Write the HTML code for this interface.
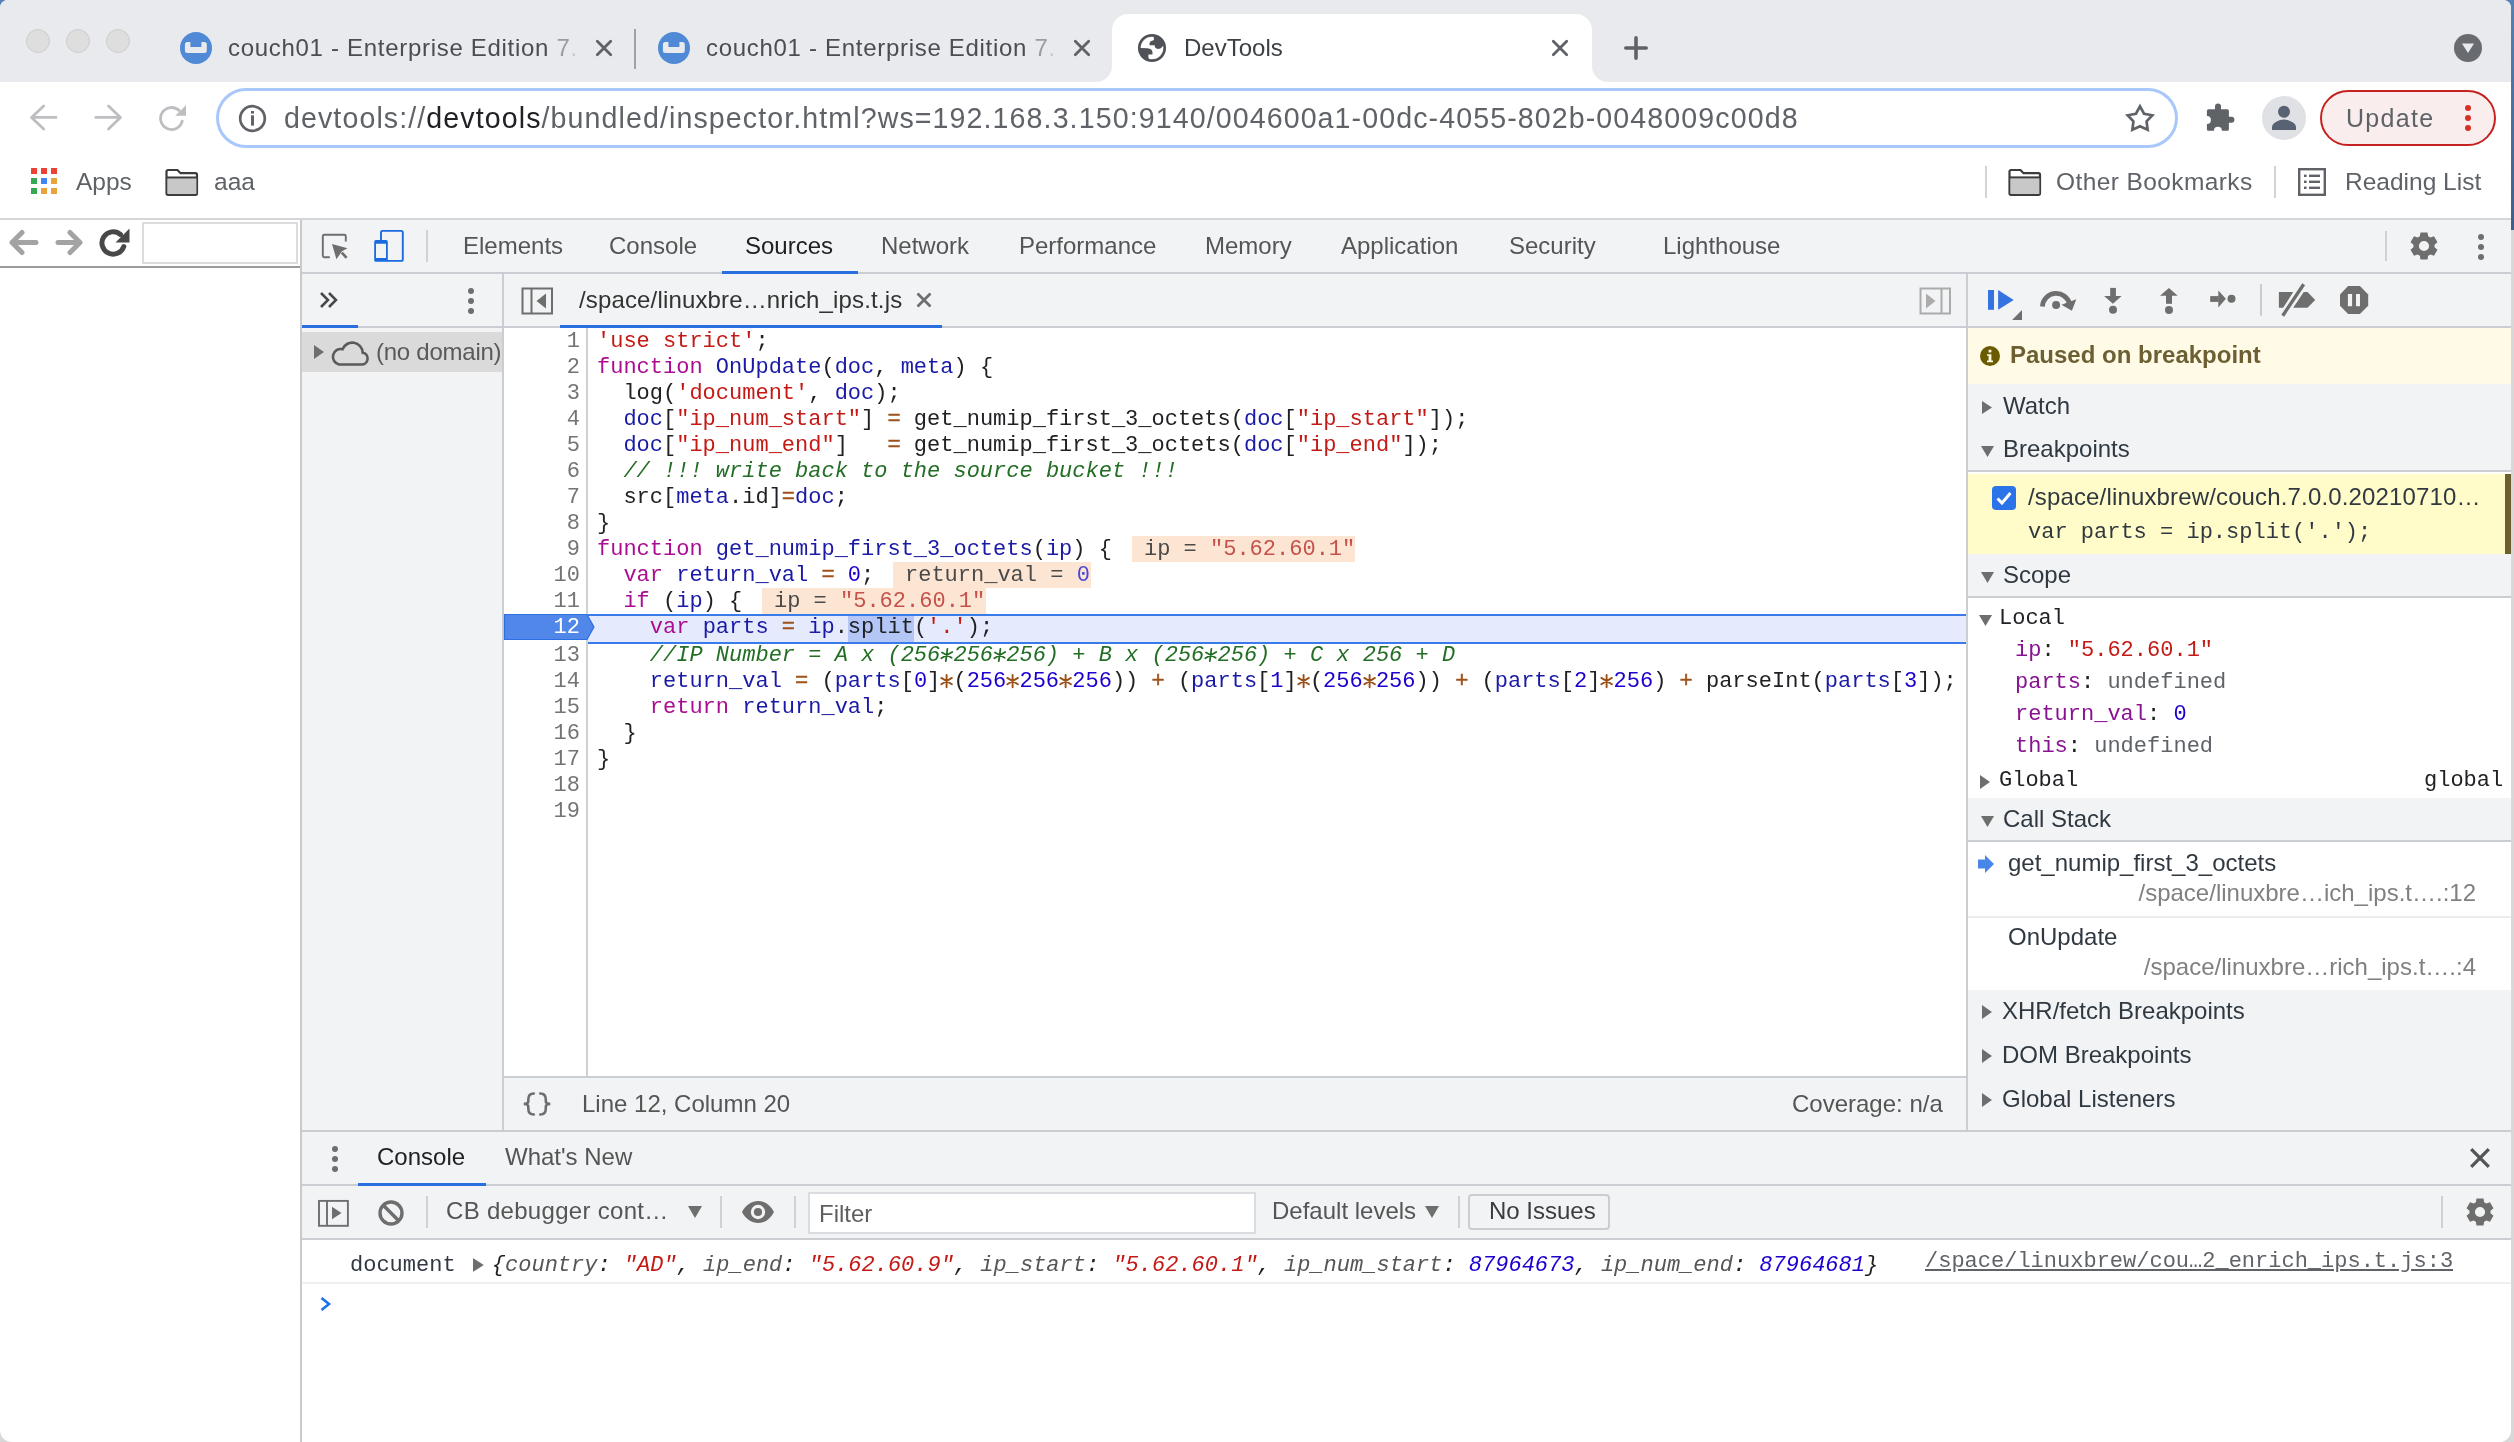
<!DOCTYPE html>
<html><head><meta charset="utf-8">
<style>
*{box-sizing:border-box;margin:0;padding:0}
html,body{width:2514px;height:1442px;overflow:hidden;background:linear-gradient(#5482b4 0,#3d5f8c 230px,#d8d8d8 230px)}
body{font-family:"Liberation Sans",sans-serif;position:relative}
.a{position:absolute}
.mono{font-family:"Liberation Mono",monospace}
svg{position:absolute;overflow:visible}
#win{will-change:transform;left:0;top:0;width:2511px;height:1442px;background:#fff;border-radius:8px 8px 12px 12px;overflow:hidden}
.t{position:absolute;white-space:pre;line-height:1}

.cl{position:absolute;left:597px;height:26px;line-height:26px;font-family:"Liberation Mono",monospace;font-size:22px;color:#202124;white-space:pre;padding-top:1px}
.ln{position:absolute;left:504px;width:76px;height:26px;line-height:26px;text-align:right;font-family:"Liberation Mono",monospace;font-size:22px;color:#747474;padding-top:1px}
.ln.cur{color:#fff}
.k{color:#aa0d91}.d{color:#1a1aa6}.s{color:#c41a16}.o{color:#a0521c;-webkit-text-stroke:0.5px #a0521c}.n{color:#1c00cf}.c{color:#236e25;font-style:italic}.sel{}.ast{position:relative;display:inline-block;vertical-align:top;margin-top:-1px}
.iv{position:absolute;height:26px;line-height:26px;padding-top:1px;padding-left:12px;background:#fce5d2;font-family:"Liberation Mono",monospace;font-size:22px;color:#4a4a4a;white-space:pre}
.ivs{color:#c5514a}.ivn{color:#4848d6}
</style></head><body>
<div id="win" class="a">
<!-- TAB STRIP -->
<div class="a" style="left:0;top:0;width:2511px;height:82px;background:#e8eaed"></div>
<!-- traffic lights -->
<div class="a" style="left:26px;top:29px;width:24px;height:24px;border-radius:50%;background:#dedede;border:1px solid #cdcdcd"></div>
<div class="a" style="left:66px;top:29px;width:24px;height:24px;border-radius:50%;background:#dedede;border:1px solid #cdcdcd"></div>
<div class="a" style="left:106px;top:29px;width:24px;height:24px;border-radius:50%;background:#dedede;border:1px solid #cdcdcd"></div>
<!-- tab 1 -->
<svg style="left:180px;top:32px" width="32" height="32" viewBox="0 0 32 32"><circle cx="16" cy="16" r="16" fill="#5089d6"/><path d="M7.4 10H10.4V15.1H21.4V10H24.3Q26.8 10 26.8 12.5V18.6Q26.8 21.1 24.3 21.1H7.4Q4.9 21.1 4.9 18.6V12.5Q4.9 10 7.4 10z" fill="#e8eaed"/></svg>
<div class="t" style="left:228px;top:36px;font-size:24px;color:#4a4d51;letter-spacing:0.7px">couch01 - Enterprise Edition <span style="color:#9a9ca0">7</span><span style="color:#c8cacd">.</span></div>
<svg style="left:594px;top:38px" width="20" height="20" viewBox="0 0 20 20"><path d="M3.3 3.3L16.7 16.7M16.7 3.3L3.3 16.7" stroke="#5f6368" stroke-width="2.8" stroke-linecap="round"/></svg>
<div class="a" style="left:634px;top:29px;width:2px;height:40px;background:#9ea1a6"></div>
<!-- tab 2 -->
<svg style="left:658px;top:32px" width="32" height="32" viewBox="0 0 32 32"><circle cx="16" cy="16" r="16" fill="#5089d6"/><path d="M7.4 10H10.4V15.1H21.4V10H24.3Q26.8 10 26.8 12.5V18.6Q26.8 21.1 24.3 21.1H7.4Q4.9 21.1 4.9 18.6V12.5Q4.9 10 7.4 10z" fill="#e8eaed"/></svg>
<div class="t" style="left:706px;top:36px;font-size:24px;color:#4a4d51;letter-spacing:0.7px">couch01 - Enterprise Edition <span style="color:#9a9ca0">7</span><span style="color:#c8cacd">.</span></div>
<svg style="left:1072px;top:38px" width="20" height="20" viewBox="0 0 20 20"><path d="M3.3 3.3L16.7 16.7M16.7 3.3L3.3 16.7" stroke="#5f6368" stroke-width="2.8" stroke-linecap="round"/></svg>
<!-- active tab -->
<div class="a" style="left:1112px;top:14px;width:480px;height:68px;background:#fff;border-radius:16px 16px 0 0"></div>
<div class="a" style="left:1096px;top:66px;width:16px;height:16px;background:radial-gradient(circle at 0 0,#e8eaed 15.5px,#fff 16.5px)"></div>
<div class="a" style="left:1592px;top:66px;width:16px;height:16px;background:radial-gradient(circle at 100% 0,#e8eaed 15.5px,#fff 16.5px)"></div>
<svg style="left:1134px;top:30px" width="36" height="36" viewBox="0 0 36 36"><circle cx="18" cy="18" r="12.7" fill="none" stroke="#4f5257" stroke-width="2.7"/><path d="M19.6 6.2L20 9.4Q19.5 10.6 17.8 10.8Q15.6 11.3 15.5 13.4V15.3H20.5L21 17.3Q22 19 24.5 19Q27 18.8 28.6 16.5L30 14A12.5 12.5 0 0 0 19.6 6.2z" fill="#4f5257"/><path d="M5.8 18L13.5 18.2Q18.3 18.6 18.5 22.4V24.6H14.4V27.5L15.4 30A12.5 12.5 0 0 1 5.6 18z" fill="#4f5257"/></svg>
<div class="t" style="left:1184px;top:36px;font-size:24px;color:#3c4043">DevTools</div>
<svg style="left:1550px;top:38px" width="20" height="20" viewBox="0 0 20 20"><path d="M3.3 3.3L16.7 16.7M16.7 3.3L3.3 16.7" stroke="#5f6368" stroke-width="2.8" stroke-linecap="round"/></svg>
<svg style="left:1622px;top:34px" width="28" height="28" viewBox="0 0 28 28"><path d="M14 3.8V24.2M3.8 14H24.2" stroke="#5f6368" stroke-width="3.6" stroke-linecap="round"/></svg>
<!-- tabs search dropdown -->
<svg style="left:2454px;top:34px" width="28" height="28" viewBox="0 0 28 28"><circle cx="14" cy="14" r="14" fill="#686b6f"/><path d="M8 9.5H20L14 19z" fill="#e8eaed"/></svg>

<!-- TOOLBAR -->
<svg style="left:28px;top:104px" width="32" height="28" viewBox="0 0 32 28"><path d="M15.7 2L3.5 13.4L15.7 25M3.8 13.4H28" stroke="#bdbec1" stroke-width="2.8" fill="none" stroke-linecap="round" stroke-linejoin="round"/></svg>
<svg style="left:92px;top:104px" width="32" height="28" viewBox="0 0 32 28"><path d="M16.5 2L28.5 13.4L16.5 25M28 13.4H3.8" stroke="#bdbec1" stroke-width="2.8" fill="none" stroke-linecap="round" stroke-linejoin="round"/></svg>
<svg style="left:156px;top:102px" width="32" height="32" viewBox="0 0 32 32"><path d="M26.2 19.2A11 11 0 1 1 23.2 8.6" stroke="#bdbec1" stroke-width="2.8" fill="none" stroke-linecap="round"/><path d="M30 3.2V13.7H19.2z" fill="#bdbec1"/></svg>
<div class="a" style="left:216px;top:88px;width:1962px;height:60px;border:3.6px solid #a8c7fa;border-radius:30px;background:#fff"></div>
<svg style="left:238px;top:104px" width="29" height="29" viewBox="0 0 29 29"><circle cx="14.5" cy="14.5" r="12.3" stroke="#5f6368" stroke-width="2.7" fill="none"/><rect x="13" y="7" width="3" height="2.6" fill="#5f6368"/><rect x="13" y="11.3" width="3" height="10.3" fill="#5f6368"/></svg>
<div class="t" style="left:284px;top:104px;font-size:28.6px;color:#5f6368;letter-spacing:1.09px">devtools://<span style="color:#202124">devtools</span>/bundled/inspector.html?ws=192.168.3.150:9140/004600a1-00dc-4055-802b-0048009c00d8</div>
<svg style="left:0;top:0" width="2514" height="1442" viewBox="0 0 2514 1442"><path d="M2140.00 106.30L2144.06 113.72L2152.36 115.28L2146.56 121.43L2147.64 129.82L2140.00 126.20L2132.36 129.82L2133.44 121.43L2127.64 115.28L2135.94 113.72z" fill="none" stroke="#5f6368" stroke-width="2.7" stroke-linejoin="miter" stroke-miterlimit="10"/></svg>
<svg style="left:0;top:0" width="2514" height="1442" viewBox="0 0 2514 1442"><path d="M2208.4 109.2H2215V106.5A3 3 0 0 1 2221 106.5V109.2H2227.4A1.5 1.5 0 0 1 2228.9 110.7V116.8H2231.4A3 3 0 0 1 2231.4 122.8H2228.9V129.2A1.5 1.5 0 0 1 2227.4 130.7H2221.9A4 4 0 0 0 2213.9 130.7H2208.4A1.5 1.5 0 0 1 2206.9 129.2V123.9A4 4 0 0 0 2206.9 115.9V110.7A1.5 1.5 0 0 1 2208.4 109.2z" fill="#5f6368"/></svg>
<div class="a" style="left:2262px;top:96px;width:44px;height:44px;border-radius:50%;background:#dfe1e5"></div>
<svg style="left:2268px;top:102px" width="32" height="32" viewBox="0 0 32 32"><circle cx="16" cy="9.8" r="6" fill="#596273"/><path d="M4 28v-3c0-4.2 7.6-7.4 12-7.4s12 3.2 12 7.4v3z" fill="#596273"/></svg>
<div class="a" style="left:2320px;top:90px;width:176px;height:56px;border:2.2px solid #c5221f;border-radius:28px;background:#f9eded"></div>
<div class="t" style="left:2346px;top:106px;font-size:25px;color:#5f6368;letter-spacing:1.3px">Update</div>
<div class="a" style="left:2465px;top:105px;width:6px;height:6px;border-radius:50%;background:#d93025"></div>
<div class="a" style="left:2465px;top:115px;width:6px;height:6px;border-radius:50%;background:#d93025"></div>
<div class="a" style="left:2465px;top:125px;width:6px;height:6px;border-radius:50%;background:#d93025"></div>

<!-- BOOKMARKS BAR -->
<svg style="left:30px;top:167px" width="28" height="28" viewBox="0 0 28 28"><rect x="1" y="1" width="6" height="6" fill="#ea4335"/><rect x="11" y="1" width="6" height="6" fill="#ea4335"/><rect x="21" y="1" width="6" height="6" fill="#ea4335"/><rect x="1" y="11" width="6" height="6" fill="#34a853"/><rect x="11" y="11" width="6" height="6" fill="#4285f4"/><rect x="21" y="11" width="6" height="6" fill="#e8a43a"/><rect x="1" y="21" width="6" height="6" fill="#34a853"/><rect x="11" y="21" width="6" height="6" fill="#e8a43a"/><rect x="21" y="21" width="6" height="6" fill="#e8a43a"/></svg>
<div class="t" style="left:76px;top:170px;font-size:24.5px;color:#5f6368">Apps</div>
<svg style="left:165px;top:167px" width="34" height="30" viewBox="0 0 34 30"><path d="M1.5 4.5a1.5 1.5 0 0 1 1.5 -1.5h9.5l3 3.2h15a1.5 1.5 0 0 1 1.5 1.5v18.6a1.5 1.5 0 0 1 -1.5 1.5h-27.5a1.5 1.5 0 0 1 -1.5 -1.5z" fill="#fff" stroke="#3c3c3c" stroke-width="2.2"/><path d="M2.6 11.2h28.8v15.6h-28.8z" fill="#c8c8c8"/><path d="M1.5 10.4h31" stroke="#3c3c3c" stroke-width="2"/></svg>
<div class="t" style="left:214px;top:170px;font-size:24.5px;color:#5f6368">aaa</div>
<div class="a" style="left:1985px;top:166px;width:2px;height:32px;background:#d3d4d6"></div>
<svg style="left:2008px;top:167px" width="34" height="30" viewBox="0 0 34 30"><path d="M1.5 4.5a1.5 1.5 0 0 1 1.5 -1.5h9.5l3 3.2h15a1.5 1.5 0 0 1 1.5 1.5v18.6a1.5 1.5 0 0 1 -1.5 1.5h-27.5a1.5 1.5 0 0 1 -1.5 -1.5z" fill="#fff" stroke="#3c3c3c" stroke-width="2.2"/><path d="M2.6 11.2h28.8v15.6h-28.8z" fill="#c8c8c8"/><path d="M1.5 10.4h31" stroke="#3c3c3c" stroke-width="2"/></svg>
<div class="t" style="left:2056px;top:170px;font-size:24.5px;color:#5f6368;letter-spacing:0.4px">Other Bookmarks</div>
<div class="a" style="left:2274px;top:166px;width:2px;height:32px;background:#d3d4d6"></div>
<svg style="left:2298px;top:168px" width="28" height="28" viewBox="0 0 28 28"><rect x="1.2" y="1.2" width="25.6" height="25.6" fill="none" stroke="#5f6368" stroke-width="2.4"/><rect x="6" y="6.6" width="2.6" height="2.4" fill="#5f6368"/><rect x="11" y="6.6" width="11" height="2.4" fill="#5f6368"/><rect x="6" y="12.6" width="2.6" height="2.4" fill="#5f6368"/><rect x="11" y="12.6" width="11" height="2.4" fill="#5f6368"/><rect x="6" y="18.6" width="2.6" height="2.4" fill="#5f6368"/><rect x="11" y="18.6" width="11" height="2.4" fill="#5f6368"/></svg>
<div class="t" style="left:2345px;top:170px;font-size:24.5px;color:#5f6368">Reading List</div>
<div class="a" style="left:0;top:218px;width:2511px;height:2px;background:#d5d6d9"></div>

<!-- LEFT PAGE -->
<svg style="left:8px;top:229px" width="32" height="28" viewBox="0 0 32 28"><path d="M14 3.5L4 13.5L14 23.5M4.5 13.5H28" stroke="#a3a3a3" stroke-width="5" fill="none" stroke-linecap="round" stroke-linejoin="round"/></svg>
<svg style="left:54px;top:229px" width="32" height="28" viewBox="0 0 32 28"><path d="M16 3.5L26 13.5L16 23.5M25.5 13.5H4" stroke="#a3a3a3" stroke-width="5" fill="none" stroke-linecap="round" stroke-linejoin="round"/></svg>
<svg style="left:98px;top:227px" width="34" height="32" viewBox="0 0 34 32"><path d="M25.8 19.5A11.2 11.2 0 1 1 22.5 7.5" stroke="#484848" stroke-width="5" fill="none" stroke-linecap="round"/><path d="M31.5 1.5V15.5H17.5z" fill="#484848"/></svg>
<div class="a" style="left:142px;top:222px;width:156px;height:42px;border:2px solid #dcdcdc;background:#fff"></div>
<div class="a" style="left:0;top:266px;width:300px;height:2px;background:#9b9b9b"></div>
<div class="a" style="left:300px;top:220px;width:2px;height:1222px;background:#c8cacd"></div>

<!-- DEVTOOLS MAIN TOOLBAR -->
<div class="a" style="left:302px;top:220px;width:2209px;height:52px;background:#f1f3f4"></div>
<div class="a" style="left:302px;top:272px;width:2209px;height:2px;background:#cacdd1"></div>
<svg style="left:0;top:0" width="2514" height="1442" viewBox="0 0 2514 1442"><path d="M329.8 257.3H324.3a1.5 1.5 0 0 1 -1.5 -1.5V236.3a1.5 1.5 0 0 1 1.5 -1.5H344.3a1.5 1.5 0 0 1 1.5 1.5V241.6" fill="none" stroke="#6e6e6e" stroke-width="1.9"/><path d="M332 243.9L347.5 248.2L342 251.3L336.4 259.2z" fill="#6e6e6e"/><path d="M341.8 252.6L346.6 257.8" stroke="#6e6e6e" stroke-width="2.7"/>
<path d="M381 240.5V232.3a1.4 1.4 0 0 1 1.4 -1.4H401.4a1.4 1.4 0 0 1 1.4 1.4V259.5a1.4 1.4 0 0 1 -1.4 1.4H386.8" fill="none" stroke="#1b6ae0" stroke-width="1.9"/><path d="M375.8 240.1H386.2a1.6 1.6 0 0 1 1.6 1.6V260.2a1.6 1.6 0 0 1 -1.6 1.6H375.8a1.6 1.6 0 0 1 -1.6 -1.6V241.7a1.6 1.6 0 0 1 1.6 -1.6z M376 243.7V257.9H386V243.7z" fill="#1b6ae0" fill-rule="evenodd"/></svg>
<div class="a" style="left:426px;top:230px;width:2px;height:32px;background:#cfd1d4"></div>
<div class="t" style="left:463px;top:234px;font-size:24px;color:#555">Elements</div>
<div class="t" style="left:609px;top:234px;font-size:24px;color:#555">Console</div>
<div class="t" style="left:745px;top:234px;font-size:24px;color:#202124">Sources</div>
<div class="a" style="left:722px;top:271px;width:136px;height:3px;background:#2a6fdf"></div>
<div class="t" style="left:881px;top:234px;font-size:24px;color:#555">Network</div>
<div class="t" style="left:1019px;top:234px;font-size:24px;color:#555">Performance</div>
<div class="t" style="left:1205px;top:234px;font-size:24px;color:#555">Memory</div>
<div class="t" style="left:1341px;top:234px;font-size:24px;color:#555">Application</div>
<div class="t" style="left:1509px;top:234px;font-size:24px;color:#555">Security</div>
<div class="t" style="left:1663px;top:234px;font-size:24px;color:#555">Lighthouse</div>
<div class="a" style="left:2385px;top:231px;width:2px;height:30px;background:#cfd1d4"></div>
<svg style="left:0;top:0" width="2514" height="1442" viewBox="0 0 2514 1442"><path fill-rule="evenodd" fill="#6e6e6e" d="M2419.86 236.24L2420.49 232.45L2427.51 232.45L2428.14 236.24L2430.38 237.53L2433.99 236.19L2437.49 242.26L2434.52 244.71L2434.52 247.29L2437.49 249.74L2433.99 255.81L2430.38 254.47L2428.14 255.76L2427.51 259.55L2420.49 259.55L2419.86 255.76L2417.62 254.47L2414.01 255.81L2410.51 249.74L2413.48 247.29L2413.48 244.71L2410.51 242.26L2414.01 236.19L2417.62 237.53zM2429.1 246A5.1 5.1 0 1 0 2418.9 246A5.1 5.1 0 1 0 2429.1 246z"/></svg>
<div class="a" style="left:2477.8px;top:233.8px;width:6.4px;height:6.4px;border-radius:50%;background:#6e6e6e"></div>
<div class="a" style="left:2477.8px;top:243.8px;width:6.4px;height:6.4px;border-radius:50%;background:#6e6e6e"></div>
<div class="a" style="left:2477.8px;top:253.8px;width:6.4px;height:6.4px;border-radius:50%;background:#6e6e6e"></div>

<!-- SOURCES TOOLBAR ROW -->
<div class="a" style="left:302px;top:274px;width:2209px;height:52px;background:#f1f3f4"></div>
<div class="a" style="left:302px;top:326px;width:2209px;height:2px;background:#cacdd1"></div>
<!-- navigator -->
<svg style="left:319px;top:291px" width="22" height="20" viewBox="0 0 22 20"><path d="M2 2L9 9L2 16M10 2L17 9L10 16" fill="none" stroke="#474747" stroke-width="2.5"/></svg>
<div class="a" style="left:302px;top:325px;width:56px;height:3px;background:#2a6fdf"></div>
<div class="a" style="left:467.5px;top:287.5px;width:6.4px;height:6.4px;border-radius:50%;background:#6e6e6e"></div>
<div class="a" style="left:467.5px;top:298px;width:6.4px;height:6.4px;border-radius:50%;background:#6e6e6e"></div>
<div class="a" style="left:467.5px;top:307.5px;width:6.4px;height:6.4px;border-radius:50%;background:#6e6e6e"></div>
<div class="a" style="left:502px;top:274px;width:2px;height:856px;background:#cacdd1"></div>
<div class="a" style="left:302px;top:328px;width:200px;height:802px;background:#f1f3f4"></div>
<div class="a" style="left:302px;top:332px;width:200px;height:40px;background:#dadada"></div>
<svg style="left:313px;top:344px" width="12" height="16" viewBox="0 0 12 16"><path d="M1 1L11 8L1 15z" fill="#6e6e6e"/></svg>
<svg style="left:329.5px;top:338.5px" width="40" height="28" viewBox="0 0 40 28"><path d="M9 25.5h22.5a6 6 0 0 0 1.2 -11.9a10.5 10.5 0 0 0 -20.2 -3.4a7.7 7.7 0 0 0 -3.5 15.3z" fill="none" stroke="#5a5a5a" stroke-width="2.6"/></svg>
<div class="t" style="left:376px;top:340px;font-size:24px;color:#5a5a5a;letter-spacing:-0.25px">(no domain)</div>
<!-- editor tab -->
<svg style="left:521px;top:287px" width="33" height="28" viewBox="0 0 33 28"><rect x="1.5" y="1.5" width="29.5" height="25" fill="none" stroke="#6e6e6e" stroke-width="2"/><path d="M10.5 1.5V26.5" stroke="#6e6e6e" stroke-width="2"/><path d="M25 6.5V21.5L15.5 14z" fill="#6e6e6e"/></svg>
<div class="t" style="left:579px;top:288px;font-size:24px;color:#333;letter-spacing:0.15px">/space/linuxbre…nrich_ips.t.js</div>
<svg style="left:916px;top:292px" width="16" height="16" viewBox="0 0 16 16"><path d="M1.5 1.5L14.5 14.5M14.5 1.5L1.5 14.5" stroke="#6e6e6e" stroke-width="2.8"/></svg>
<div class="a" style="left:560px;top:325px;width:382px;height:3px;background:#2a6fdf"></div>
<svg style="left:1919px;top:287px" width="33" height="28" viewBox="0 0 33 28"><rect x="1.5" y="1.5" width="29.5" height="25" fill="none" stroke="#ababab" stroke-width="2"/><path d="M22.5 1.5V26.5" stroke="#ababab" stroke-width="2"/><path d="M7 6.5V21.5L16.5 14z" fill="#ababab"/></svg>
<div class="a" style="left:1966px;top:274px;width:2px;height:856px;background:#cacdd1"></div>
<!-- debugger toolbar -->
<svg style="left:0;top:0" width="2514" height="1442" viewBox="0 0 2514 1442">
<rect x="1988" y="290" width="6" height="19.8" fill="#3574e0"/>
<path d="M1998.1 290L2013.7 300L1998.1 309.8z" fill="#3574e0"/>
<path d="M2022 310.1V320H2012.1z" fill="#6e6e6e"/>
<path d="M2042.4 306.5A13.8 13.8 0 0 1 2069.6 304" fill="none" stroke="#6e6e6e" stroke-width="4.8"/>
<path d="M2061.5 304.8L2076.3 299.2L2071.9 310.8z" fill="#6e6e6e"/>
<circle cx="2056.1" cy="304.9" r="4" fill="#6e6e6e"/>
<rect x="2110.2" y="287.9" width="5.7" height="9" fill="#6e6e6e"/>
<path d="M2104.1 296.1H2121.6L2112.9 303.8z" fill="#6e6e6e"/>
<circle cx="2113" cy="309.8" r="4" fill="#6e6e6e"/>
<path d="M2160 295.7H2177.7L2168.9 288z" fill="#6e6e6e"/>
<rect x="2166" y="295" width="6" height="8.8" fill="#6e6e6e"/>
<circle cx="2169" cy="310" r="4" fill="#6e6e6e"/>
<rect x="2210.2" y="296.1" width="8.5" height="5.8" fill="#6e6e6e"/>
<path d="M2218.3 290.4L2225.9 298.8L2218.3 307.6z" fill="#6e6e6e"/>
<circle cx="2231.5" cy="298.8" r="4" fill="#6e6e6e"/>
<rect x="2260" y="284.2" width="2" height="31.5" fill="#cbcbcb"/>
<path d="M2278.9 292.1H2293.2L2283.2 307.8H2278.9z" fill="#6e6e6e"/>
<path d="M2303.7 292.1H2307.5L2315.2 300L2307.5 307.8H2293.2z" fill="#6e6e6e"/>
<path d="M2303.7 284.2L2282.7 315.7" stroke="#6e6e6e" stroke-width="3.4"/>
<path d="M2348.1 286.1H2359.9L2368.2 294.4V305.8L2359.9 314.1H2348.1L2340 305.8V294.4z" fill="#6e6e6e"/>
<rect x="2347.9" y="294" width="4.2" height="12.2" fill="#f1f3f4"/>
<rect x="2356" y="294" width="4" height="12.2" fill="#f1f3f4"/>
</svg>
<!-- EDITOR -->
<div class="a" style="left:504px;top:328px;width:1462px;height:748px;background:#fff"></div>
<div class="a" style="left:586px;top:328px;width:2px;height:748px;background:#d0d0d0"></div>
<!-- inline values -->
<div class="iv" style="left:1132px;top:536px;width:223px">ip = <span class="ivs">"5.62.60.1"</span></div>
<div class="iv" style="left:893px;top:562px;width:198px">return_val = <span class="ivn">0</span></div>
<div class="iv" style="left:762px;top:588px;width:224px">ip = <span class="ivs">"5.62.60.1"</span></div>
<!-- execution line -->
<div class="a" style="left:588px;top:614px;width:1378px;height:30px;background:#e5ebfc;border-top:2px solid #3a7bea;border-bottom:2px solid #3a7bea"></div>
<div class="a" style="left:848px;top:616px;width:66px;height:26px;background:#b3c6f5"></div>
<svg style="left:504px;top:614px" width="92" height="26" viewBox="0 0 92 26"><path d="M0.5 0.5H83L90 13L83 25.5H0.5z" fill="#5087e8" stroke="#2d6ee0" stroke-width="1.2"/></svg>
<div class="cl" style="top:328px;height:26px"><span class="s">&#x27;use strict&#x27;</span>;</div>
<div class="ln" style="top:328px">1</div>
<div class="cl" style="top:354px;height:26px"><span class="k">function</span> <span class="d">OnUpdate</span>(<span class="d">doc</span>, <span class="d">meta</span>) {</div>
<div class="ln" style="top:354px">2</div>
<div class="cl" style="top:380px;height:26px">  log(<span class="s">&#x27;document&#x27;</span>, <span class="d">doc</span>);</div>
<div class="ln" style="top:380px">3</div>
<div class="cl" style="top:406px;height:26px">  <span class="d">doc</span>[<span class="s">&quot;ip_num_start&quot;</span>] <span class="o">=</span> get_numip_first_3_octets(<span class="d">doc</span>[<span class="s">&quot;ip_start&quot;</span>]);</div>
<div class="ln" style="top:406px">4</div>
<div class="cl" style="top:432px;height:26px">  <span class="d">doc</span>[<span class="s">&quot;ip_num_end&quot;</span>]   <span class="o">=</span> get_numip_first_3_octets(<span class="d">doc</span>[<span class="s">&quot;ip_end&quot;</span>]);</div>
<div class="ln" style="top:432px">5</div>
<div class="cl" style="top:458px;height:26px">  <span class="c">// !!! write back to the source bucket !!!</span></div>
<div class="ln" style="top:458px">6</div>
<div class="cl" style="top:484px;height:26px">  src[<span class="d">meta</span>.id]<span class="o">=</span><span class="d">doc</span>;</div>
<div class="ln" style="top:484px">7</div>
<div class="cl" style="top:510px;height:26px">}</div>
<div class="ln" style="top:510px">8</div>
<div class="cl" style="top:536px;height:26px"><span class="k">function</span> <span class="d">get_numip_first_3_octets</span>(<span class="d">ip</span>) {</div>
<div class="ln" style="top:536px">9</div>
<div class="cl" style="top:562px;height:26px">  <span class="k">var</span> <span class="d">return_val</span> <span class="o">=</span> <span class="n">0</span>;</div>
<div class="ln" style="top:562px">10</div>
<div class="cl" style="top:588px;height:26px">  <span class="k">if</span> (<span class="d">ip</span>) {</div>
<div class="ln" style="top:588px">11</div>
<div class="cl" style="top:614px;height:28px">    <span class="k">var</span> <span class="d">parts</span> <span class="o">=</span> <span class="d">ip</span>.<span class="sel">split</span>(<span class="s">&#x27;.&#x27;</span>);</div>
<div class="ln cur" style="top:614px">12</div>
<div class="cl" style="top:642px;height:26px">    <span class="c">//IP Number = A x (256<svg class="ast" width="13.2" height="26" viewBox="0 0 13.2 26"><path d="M7.4 7L5.8 19.2M2 10.5L11.6 15.7M1.3 16.3L12.3 9.9" stroke="#236e25" stroke-width="1.8" stroke-linecap="round"/></svg>256<svg class="ast" width="13.2" height="26" viewBox="0 0 13.2 26"><path d="M7.4 7L5.8 19.2M2 10.5L11.6 15.7M1.3 16.3L12.3 9.9" stroke="#236e25" stroke-width="1.8" stroke-linecap="round"/></svg>256) + B x (256<svg class="ast" width="13.2" height="26" viewBox="0 0 13.2 26"><path d="M7.4 7L5.8 19.2M2 10.5L11.6 15.7M1.3 16.3L12.3 9.9" stroke="#236e25" stroke-width="1.8" stroke-linecap="round"/></svg>256) + C x 256 + D</span></div>
<div class="ln" style="top:642px">13</div>
<div class="cl" style="top:668px;height:26px">    <span class="d">return_val</span> <span class="o">=</span> (<span class="d">parts</span>[<span class="n">0</span>]<svg class="ast" width="13.2" height="26" viewBox="0 0 13.2 26"><path d="M6.6 7V19.2M1.3 9.9L11.9 16.3M1.3 16.3L11.9 9.9" stroke="#9a4f17" stroke-width="1.9" stroke-linecap="round"/></svg>(<span class="n">256</span><svg class="ast" width="13.2" height="26" viewBox="0 0 13.2 26"><path d="M6.6 7V19.2M1.3 9.9L11.9 16.3M1.3 16.3L11.9 9.9" stroke="#9a4f17" stroke-width="1.9" stroke-linecap="round"/></svg><span class="n">256</span><svg class="ast" width="13.2" height="26" viewBox="0 0 13.2 26"><path d="M6.6 7V19.2M1.3 9.9L11.9 16.3M1.3 16.3L11.9 9.9" stroke="#9a4f17" stroke-width="1.9" stroke-linecap="round"/></svg><span class="n">256</span>)) <span class="o">+</span> (<span class="d">parts</span>[<span class="n">1</span>]<svg class="ast" width="13.2" height="26" viewBox="0 0 13.2 26"><path d="M6.6 7V19.2M1.3 9.9L11.9 16.3M1.3 16.3L11.9 9.9" stroke="#9a4f17" stroke-width="1.9" stroke-linecap="round"/></svg>(<span class="n">256</span><svg class="ast" width="13.2" height="26" viewBox="0 0 13.2 26"><path d="M6.6 7V19.2M1.3 9.9L11.9 16.3M1.3 16.3L11.9 9.9" stroke="#9a4f17" stroke-width="1.9" stroke-linecap="round"/></svg><span class="n">256</span>)) <span class="o">+</span> (<span class="d">parts</span>[<span class="n">2</span>]<svg class="ast" width="13.2" height="26" viewBox="0 0 13.2 26"><path d="M6.6 7V19.2M1.3 9.9L11.9 16.3M1.3 16.3L11.9 9.9" stroke="#9a4f17" stroke-width="1.9" stroke-linecap="round"/></svg><span class="n">256</span>) <span class="o">+</span> parseInt(<span class="d">parts</span>[<span class="n">3</span>]);</div>
<div class="ln" style="top:668px">14</div>
<div class="cl" style="top:694px;height:26px">    <span class="k">return</span> <span class="d">return_val</span>;</div>
<div class="ln" style="top:694px">15</div>
<div class="cl" style="top:720px;height:26px">  }</div>
<div class="ln" style="top:720px">16</div>
<div class="cl" style="top:746px;height:26px">}</div>
<div class="ln" style="top:746px">17</div>
<div class="cl" style="top:772px;height:26px"></div>
<div class="ln" style="top:772px">18</div>
<div class="cl" style="top:798px;height:26px"></div>
<div class="ln" style="top:798px">19</div>
<!-- STATUS BAR -->
<div class="a" style="left:504px;top:1076px;width:1462px;height:2px;background:#cacdd1"></div>
<div class="a" style="left:504px;top:1078px;width:1462px;height:52px;background:#f1f3f4"></div>
<svg style="left:0;top:0" width="2514" height="1442" viewBox="0 0 2514 1442"><path d="M533.8 1093.5Q528.3 1093.5 528.3 1099.5V1101.5Q528.3 1103.8 523.8 1104Q528.3 1104.2 528.3 1106.5V1108.5Q528.3 1114.5 533.8 1114.5M540.3 1093.5Q545.8 1093.5 545.8 1099.5V1101.5Q545.8 1103.8 550.3 1104Q545.8 1104.2 545.8 1106.5V1108.5Q545.8 1114.5 540.3 1114.5" fill="none" stroke="#6e6e6e" stroke-width="2.6" stroke-linecap="round"/></svg>
<div class="t" style="left:582px;top:1092px;font-size:24px;color:#555">Line 12, Column 20</div>
<div class="t" style="left:1792px;top:1092px;font-size:24px;color:#555">Coverage: n/a</div>

<!-- SIDEBAR -->
<div class="a" style="left:1968px;top:328px;width:543px;height:802px;background:#f1f3f4"></div>
<div class="a" style="left:1968px;top:328px;width:543px;height:56px;background:#fffbe6"></div>
<svg style="left:1980px;top:346px" width="20" height="20" viewBox="0 0 20 20"><circle cx="10" cy="10" r="10" fill="#6b5b00"/><rect x="8.6" y="3.8" width="2.8" height="2.6" fill="#fffbe6"/><path d="M7 8.2H11.4V14.6H13V16.2H7V14.6H8.6V9.8H7z" fill="#fffbe6"/></svg>
<div class="t" style="left:2010px;top:343px;font-size:24px;font-weight:bold;color:#6c5f33">Paused on breakpoint</div>
<!-- Watch -->
<svg style="left:1981px;top:400px" width="12" height="15" viewBox="0 0 12 15"><path d="M1 1L11 7.5L1 14z" fill="#6e6e6e"/></svg>
<div class="t" style="left:2003px;top:394px;font-size:24px;color:#303942">Watch</div>
<!-- Breakpoints -->
<svg style="left:1980px;top:445px" width="15" height="13" viewBox="0 0 15 13"><path d="M1 1H14L7.5 12z" fill="#6e6e6e"/></svg>
<div class="t" style="left:2003px;top:437px;font-size:24px;color:#303942">Breakpoints</div>
<div class="a" style="left:1968px;top:470px;width:543px;height:2px;background:#cacdd1"></div>
<div class="a" style="left:1968px;top:472px;width:543px;height:2px;background:#fff"></div>
<div class="a" style="left:1968px;top:474px;width:543px;height:80px;background:#fffcc9"></div>
<div class="a" style="left:2505px;top:474px;width:6px;height:80px;background:#6b5e30"></div>
<svg style="left:1992px;top:486px" width="24" height="24" viewBox="0 0 24 24"><rect x="0" y="0" width="24" height="24" rx="4" fill="#2a73e8"/><path d="M5.5 12.5L10 17L18.5 7" fill="none" stroke="#fff" stroke-width="3"/></svg>
<div class="t" style="left:2028px;top:485px;font-size:24px;color:#303942;letter-spacing:0.15px">/space/linuxbrew/couch.7.0.0.20210710…</div>
<div class="t mono" style="left:2028px;top:522px;font-size:22px;color:#303942">var parts = ip.split('.');</div>
<!-- Scope -->
<svg style="left:1980px;top:571px" width="15" height="13" viewBox="0 0 15 13"><path d="M1 1H14L7.5 12z" fill="#6e6e6e"/></svg>
<div class="t" style="left:2003px;top:563px;font-size:24px;color:#303942">Scope</div>
<div class="a" style="left:1968px;top:596px;width:543px;height:2px;background:#cacdd1"></div>
<div class="a" style="left:1968px;top:598px;width:543px;height:200px;background:#fff"></div>
<svg style="left:1978px;top:614px" width="15" height="13" viewBox="0 0 15 13"><path d="M1 1H14L7.5 12z" fill="#6e6e6e"/></svg>
<div class="t mono" style="left:1999px;top:608px;font-size:22px;color:#202124">Local</div>
<div class="t mono" style="left:2015px;top:640px;font-size:22px;color:#202124"><span style="color:#881391">ip</span>: <span style="color:#c41a16">"5.62.60.1"</span></div>
<div class="t mono" style="left:2015px;top:672px;font-size:22px;color:#202124"><span style="color:#881391">parts</span>: <span style="color:#5f6368">undefined</span></div>
<div class="t mono" style="left:2015px;top:704px;font-size:22px;color:#202124"><span style="color:#881391">return_val</span>: <span style="color:#1c00cf">0</span></div>
<div class="t mono" style="left:2015px;top:736px;font-size:22px;color:#202124"><span style="color:#881391">this</span>: <span style="color:#5f6368">undefined</span></div>
<svg style="left:1979px;top:774px" width="12" height="16" viewBox="0 0 12 16"><path d="M1 1L11 8L1 15z" fill="#6e6e6e"/></svg>
<div class="t mono" style="left:1999px;top:770px;font-size:22px;color:#202124">Global</div>
<div class="t mono" style="left:2424px;top:770px;font-size:22px;color:#202124">global</div>
<!-- Call Stack -->
<svg style="left:1980px;top:815px" width="15" height="13" viewBox="0 0 15 13"><path d="M1 1H14L7.5 12z" fill="#6e6e6e"/></svg>
<div class="t" style="left:2003px;top:807px;font-size:24px;color:#303942">Call Stack</div>
<div class="a" style="left:1968px;top:840px;width:543px;height:2px;background:#cacdd1"></div>
<div class="a" style="left:1968px;top:842px;width:543px;height:148px;background:#fff"></div>
<svg style="left:1977px;top:854px" width="18" height="20" viewBox="0 0 18 20"><path d="M1 5.5H8V1L17 10L8 19V14.5H1z" fill="#4a86e8"/></svg>
<div class="t" style="left:2008px;top:851px;font-size:24px;color:#303942">get_numip_first_3_octets</div>
<div class="t" style="right:35px;top:881px;font-size:24px;color:#808080">/space/linuxbre…ich_ips.t….:12</div>
<div class="a" style="left:1968px;top:916px;width:543px;height:2px;background:#ececec"></div>
<div class="t" style="left:2008px;top:925px;font-size:24px;color:#303942">OnUpdate</div>
<div class="t" style="right:35px;top:955px;font-size:24px;color:#808080">/space/linuxbre…rich_ips.t….:4</div>
<!-- more headers -->
<svg style="left:1981px;top:1004px" width="12" height="16" viewBox="0 0 12 16"><path d="M1 1L11 8L1 15z" fill="#6e6e6e"/></svg>
<div class="t" style="left:2002px;top:999px;font-size:24px;color:#303942">XHR/fetch Breakpoints</div>
<svg style="left:1981px;top:1048px" width="12" height="16" viewBox="0 0 12 16"><path d="M1 1L11 8L1 15z" fill="#6e6e6e"/></svg>
<div class="t" style="left:2002px;top:1043px;font-size:24px;color:#303942">DOM Breakpoints</div>
<svg style="left:1981px;top:1092px" width="12" height="16" viewBox="0 0 12 16"><path d="M1 1L11 8L1 15z" fill="#6e6e6e"/></svg>
<div class="t" style="left:2002px;top:1087px;font-size:24px;color:#303942">Global Listeners</div>

<!-- DRAWER -->
<div class="a" style="left:302px;top:1130px;width:2209px;height:2px;background:#cacdd1"></div>
<div class="a" style="left:302px;top:1132px;width:2209px;height:52px;background:#f1f3f4"></div>
<div class="a" style="left:332px;top:1145.5px;width:6.4px;height:6.4px;border-radius:50%;background:#6e6e6e"></div>
<div class="a" style="left:332px;top:1155.5px;width:6.4px;height:6.4px;border-radius:50%;background:#6e6e6e"></div>
<div class="a" style="left:332px;top:1165.5px;width:6.4px;height:6.4px;border-radius:50%;background:#6e6e6e"></div>
<div class="t" style="left:377px;top:1145px;font-size:24px;color:#202124">Console</div>
<div class="t" style="left:505px;top:1145px;font-size:24px;color:#555">What's New</div>
<svg style="left:2470px;top:1148px" width="20" height="20" viewBox="0 0 20 20"><path d="M1.2 1.2L18.8 18.8M18.8 1.2L1.2 18.8" stroke="#555" stroke-width="3.3"/></svg>
<div class="a" style="left:302px;top:1184px;width:2209px;height:2px;background:#cacdd1"></div>
<div class="a" style="left:358px;top:1183px;width:128px;height:3px;background:#2a6fdf"></div>
<div class="a" style="left:302px;top:1186px;width:2209px;height:52px;background:#f1f3f4"></div>
<svg style="left:317px;top:1199px" width="33" height="28" viewBox="0 0 33 28"><rect x="2" y="1.9" width="28.9" height="24.9" fill="none" stroke="#6e6e6e" stroke-width="1.9"/><path d="M10 1.9V26.8" stroke="#6e6e6e" stroke-width="1.9"/><path d="M15 7.8V20.2L24.5 14z" fill="#6e6e6e"/></svg>
<svg style="left:377px;top:1199px" width="28" height="28" viewBox="0 0 28 28"><circle cx="14" cy="14" r="11" fill="none" stroke="#6e6e6e" stroke-width="3.4"/><path d="M6.3 6.3L21.7 21.7" stroke="#6e6e6e" stroke-width="3.4"/></svg>
<div class="a" style="left:426px;top:1196px;width:2px;height:32px;background:#cfd1d4"></div>
<div class="t" style="left:446px;top:1199px;font-size:24px;color:#555;letter-spacing:0.3px">CB debugger cont…</div>
<svg style="left:687px;top:1205px" width="16" height="14" viewBox="0 0 16 14"><path d="M1 1H15L8 13z" fill="#6e6e6e"/></svg>
<div class="a" style="left:720px;top:1196px;width:2px;height:32px;background:#cfd1d4"></div>
<svg style="left:741px;top:1200px" width="34" height="24" viewBox="0 0 34 24"><path d="M1 12C5 4.5 11 1 17 1S29 4.5 33 12C29 19.5 23 23 17 23S5 19.5 1 12z" fill="#6e6e6e"/><circle cx="17" cy="12" r="7.2" fill="#f1f3f4"/><circle cx="17" cy="12" r="4.1" fill="#6e6e6e"/></svg>
<div class="a" style="left:794px;top:1196px;width:2px;height:32px;background:#cfd1d4"></div>
<div class="a" style="left:808px;top:1192px;width:448px;height:42px;background:#fff;border:2px solid #dadce0"></div>
<div class="t" style="left:819px;top:1202px;font-size:24px;color:#5f5f5f">Filter</div>
<div class="t" style="left:1272px;top:1199px;font-size:24px;color:#555">Default levels</div>
<svg style="left:1424px;top:1205px" width="16" height="14" viewBox="0 0 16 14"><path d="M1 1H15L8 13z" fill="#6e6e6e"/></svg>
<div class="a" style="left:1458px;top:1196px;width:2px;height:32px;background:#cfd1d4"></div>
<div class="a" style="left:1468px;top:1194px;width:142px;height:36px;border:2px solid #cacdd1;border-radius:4px"></div>
<div class="t" style="left:1489px;top:1199px;font-size:24px;color:#3c3c3c">No Issues</div>
<div class="a" style="left:2441px;top:1196px;width:2px;height:32px;background:#cfd1d4"></div>
<svg style="left:0;top:0" width="2514" height="1442" viewBox="0 0 2514 1442"><path fill-rule="evenodd" fill="#6e6e6e" d="M2475.86 1202.24L2476.49 1198.45L2483.51 1198.45L2484.14 1202.24L2486.38 1203.53L2489.99 1202.19L2493.49 1208.26L2490.52 1210.71L2490.52 1213.29L2493.49 1215.74L2489.99 1221.81L2486.38 1220.47L2484.14 1221.76L2483.51 1225.55L2476.49 1225.55L2475.86 1221.76L2473.62 1220.47L2470.01 1221.81L2466.51 1215.74L2469.48 1213.29L2469.48 1210.71L2466.51 1208.26L2470.01 1202.19L2473.62 1203.53zM2485.1 1212A5.1 5.1 0 1 0 2474.9 1212A5.1 5.1 0 1 0 2485.1 1212z"/></svg>
<div class="a" style="left:302px;top:1238px;width:2209px;height:2px;background:#cacdd1"></div>
<div class="a" style="left:302px;top:1240px;width:2209px;height:202px;background:#fff"></div>
<div class="t mono" style="left:350px;top:1255px;font-size:22px;color:#303942">document <span style="display:inline-block;width:11px;height:14px;background:#6e6e6e;clip-path:polygon(0 0,100% 50%,0 100%);margin:0 8px 0 4px;vertical-align:-1px"></span><i style="color:#202124">{<span style="color:#565656">country</span>: <span style="color:#c41a16">"AD"</span>, <span style="color:#565656">ip_end</span>: <span style="color:#c41a16">"5.62.60.9"</span>, <span style="color:#565656">ip_start</span>: <span style="color:#c41a16">"5.62.60.1"</span>, <span style="color:#565656">ip_num_start</span>: <span style="color:#1c00cf">87964673</span>, <span style="color:#565656">ip_num_end</span>: <span style="color:#1c00cf">87964681</span>}</i></div>
<div class="t mono" style="left:1925px;top:1251px;font-size:22px;color:#5f6368;text-decoration:underline">/space/linuxbrew/cou…2_enrich_ips.t.js:3</div>
<div class="a" style="left:302px;top:1282px;width:2209px;height:2px;background:#efefef"></div>
<svg style="left:319px;top:1296px" width="14" height="16" viewBox="0 0 14 16"><path d="M2.5 2L10 8L2.5 14" fill="none" stroke="#1a73e8" stroke-width="2.6"/></svg>

</div>
</body></html>
